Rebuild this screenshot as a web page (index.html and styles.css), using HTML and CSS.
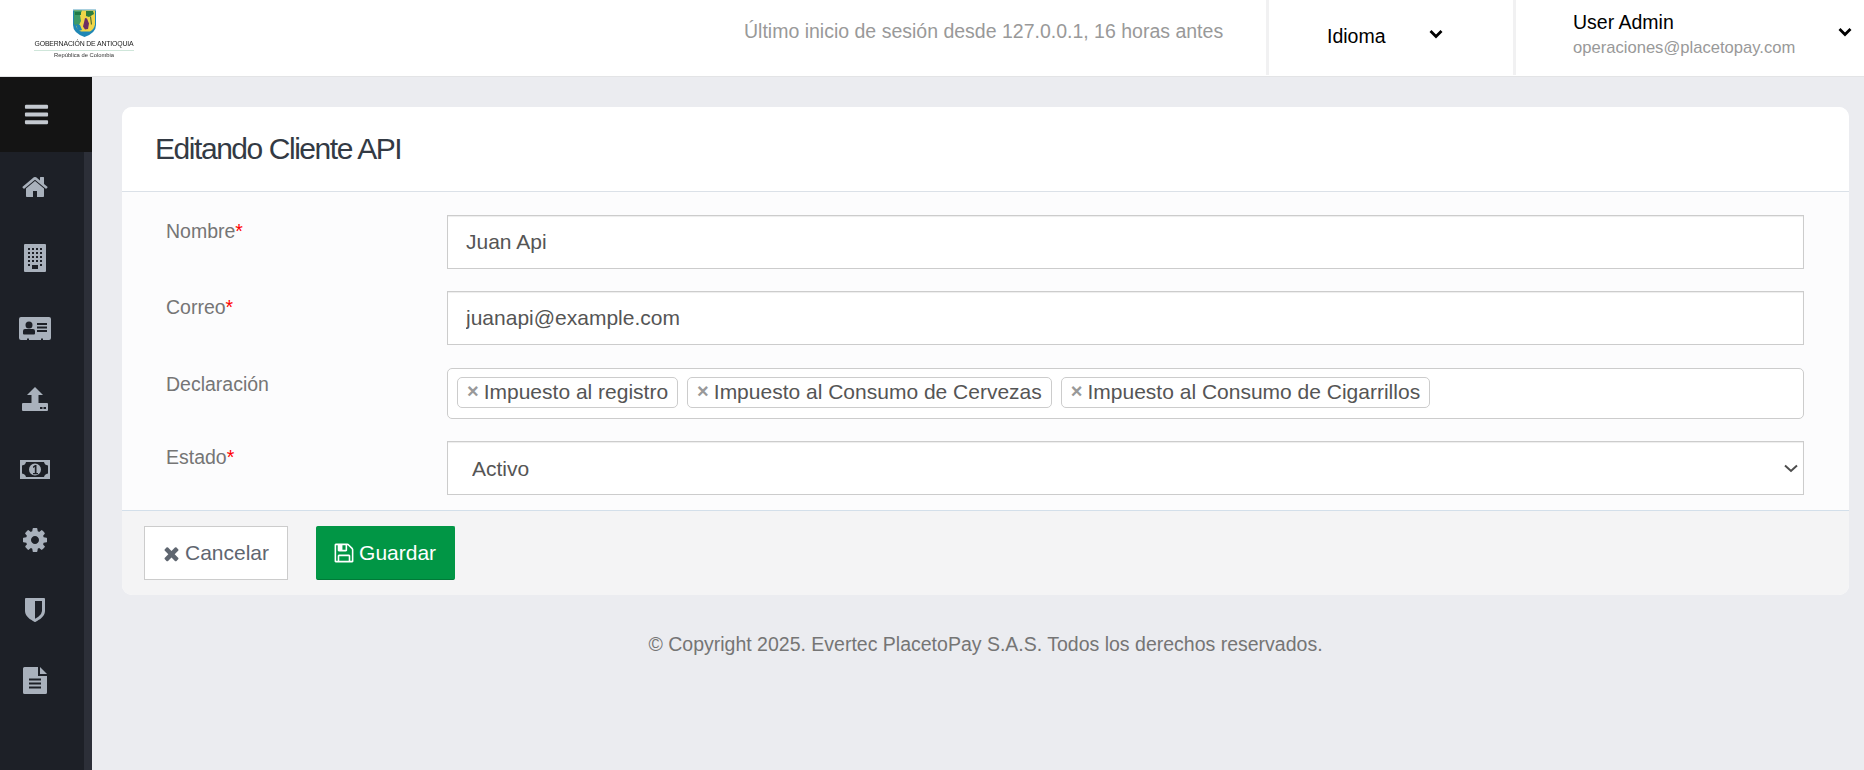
FILE: index.html
```html
<!DOCTYPE html>
<html lang="es">
<head>
<meta charset="utf-8">
<title>Editando Cliente API</title>
<link rel="stylesheet" href="styles.css">
</head>
<body>
<header class="topbar">
  <div class="logo">
    <svg class="logo-shield" viewBox="0 0 23 28" width="23" height="28">
      <path d="M0 0h23v16q0 8-11.500 12Q0 24 0 16z" fill="#1f87b5"/>
      <path d="M0 0h23v1.500H0z" fill="#a9d0df"/>
      <path d="M1 1.500h21v14q-1 5-5 7H8q-4-2-5-6z" fill="#f0d548"/>
      <path d="M1 1.500h8L7 6l1 6-3 6-4-3z" fill="#3d9a68"/>
      <path d="M2 3h6v3H2z" fill="#1f7a45"/>
      <path d="M3 15l4 1 2 5-4 1z" fill="#1f87b5"/>
      <path d="M12 9l2 .5 2 5-1 5.500-3 .5-2-3 1-4z" fill="#6d2f63"/>
      <path d="M13 2h7l1 3-5 3-3-1z" fill="#2c7d3f"/>
      <path d="M18 7l1 8-1 1-1-8z" fill="#4c6b2f"/>
    </svg>
    <span class="logo-name">GOBERNACIÓN DE ANTIOQUIA</span>
    <span class="logo-sub">República de Colombia</span>
  </div>
  <div class="last-login">Último inicio de sesión desde 127.0.0.1, 16 horas antes</div>
  <div class="menu menu-lang">
    <span>Idioma</span>
    <svg class="chev" viewBox="0 0 14 10" width="14" height="10"><path d="M1.500 2 7 7.500 12.500 2" fill="none" stroke="#000" stroke-width="2.800"/></svg>
  </div>
  <div class="menu menu-user">
    <div class="user-text">
      <span class="user-name">User Admin</span>
      <span class="user-mail">operaciones@placetopay.com</span>
    </div>
    <svg class="chev" viewBox="0 0 14 10" width="14" height="10"><path d="M1.500 2 7 7.500 12.500 2" fill="none" stroke="#000" stroke-width="2.800"/></svg>
  </div>
</header>
<div class="shell">
  <nav class="sidebar">
    <div class="toggle">
      <svg viewBox="0 0 1792 1792" width="27" height="27"><path fill="#c4c9d0" d="M1664 1344v128q0 26-19 45t-45 19h-1408q-26 0-45-19t-19-45v-128q0-26 19-45t45-19h1408q26 0 45 19t19 45zm0-512v128q0 26-19 45t-45 19h-1408q-26 0-45-19t-19-45v-128q0-26 19-45t45-19h1408q26 0 45 19t19 45zm0-512v128q0 26-19 45t-45 19h-1408q-26 0-45-19t-19-45v-128q0-26 19-45t45-19h1408q26 0 45 19t19 45z"/></svg>
    </div>
    <div class="nav-item">
      <svg viewBox="0 0 1792 1792" width="28" height="28"><path d="M1472 992v480q0 26-19 45t-45 19h-384v-384h-256v384h-384q-26 0-45-19t-19-45v-480q0-1 .5-3t.5-3l575-474 575 474q1 2 1 6zm223-69l-62 74q-8 9-21 11h-3q-13 0-21-7l-692-577-692 577q-12 8-24 7-13-2-21-11l-62-74q-8-10-7-23.500t11-21.500l719-599q32-26 76-26t76 26l244 204v-195q0-14 9-23t23-9h192q14 0 23 9t9 23v408l219 182q10 8 11 21.500t-7 23.500z"/></svg>
    </div>
    <div class="nav-item">
      <svg viewBox="0 0 22 28" width="22" height="28"><path fill-rule="evenodd" d="M1 0h20a1 1 0 0 1 1 1v26a1 1 0 0 1-1 1H1a1 1 0 0 1-1-1V1a1 1 0 0 1 1-1zM4 4v2h2V4zm4 0v2h2V4zm4 0v2h2V4zm4 0v2h2V4zM4 8v2h2V8zm4 0v2h2V8zm4 0v2h2V8zm4 0v2h2V8zM4 12v2h2v-2zm4 0v2h2v-2zm4 0v2h2v-2zm4 0v2h2v-2zM4 16v2h2v-2zm4 0v2h2v-2zm4 0v2h2v-2zm4 0v2h2v-2zM4 20v2h2v-2zm12 0v2h2v-2zM8 21v4h6v-4z"/></svg>
    </div>
    <div class="nav-item">
      <svg viewBox="0 0 32 23" width="32" height="23"><path fill-rule="evenodd" d="M2 0h28a2 2 0 0 1 2 2v19a2 2 0 0 1-2 2h-6v-1.500h-2V23H10v-1.500H8V23H2a2 2 0 0 1-2-2V2a2 2 0 0 1 2-2zM10 4.500a3.500 3.500 0 1 0 0 7 3.500 3.500 0 0 0 0-7zM6 12a2 2 0 0 0-2 2v2.500a1 1 0 0 0 1 1h10a1 1 0 0 0 1-1V14a2 2 0 0 0-2-2zM18 6v2h10V6zm0 3.500v2h10v-2zm0 3.500v2h10v-2z"/></svg>
    </div>
    <div class="nav-item">
      <svg viewBox="0 0 26 24" width="26" height="24"><path fill-rule="evenodd" d="M13 0l8 8h-4.500v8H25a1 1 0 0 1 1 1v6a1 1 0 0 1-1 1H1a1 1 0 0 1-1-1v-6a1 1 0 0 1 1-1h8.500V8H5zM18 20v2h2.500v-2zm3.500 0v2H24v-2z"/></svg>
    </div>
    <div class="nav-item">
      <svg viewBox="0 0 30 19" width="30" height="19"><path fill-rule="evenodd" d="M0 0h30v19H0zM6 2Q5.500 5 2 5.500v8Q5.500 14 6 17h18q.5-3 4-3.500v-8Q24.500 5 24 2zm9 1.500a6 6 0 1 1 0 12 6 6 0 0 1 0-12z"/><path fill="#1d2027" d="M13 6.500l2-1.500h1.500v8H18v1.300h-5V13h1.800V7l-1.800 1z"/></svg>
    </div>
    <div class="nav-item">
      <svg viewBox="0 0 1792 1792" width="28" height="28"><path d="M1152 896q0-106-75-181t-181-75-181 75-75 181 75 181 181 75 181-75 75-181zm512-109v222q0 12-8 23t-20 13l-185 28q-19 54-39 91 35 50 107 138 10 12 10 25t-9 23q-27 37-99 108t-94 71q-12 0-26-9l-138-108q-44 23-91 38-16 136-29 186-7 28-36 28h-222q-14 0-24.500-8.500t-11.500-21.500l-28-184q-49-16-90-37l-141 107q-10 9-25 9-14 0-25-11-126-114-165-168-7-10-7-23 0-12 8-23 15-21 51-66.500t54-70.500q-27-50-41-99l-183-27q-13-2-21-12.500t-8-23.500v-222q0-12 8-23t19-13l186-28q14-46 39-92-40-57-107-138-10-12-10-24 0-10 9-23 26-36 98.500-107.500t94.500-71.500q13 0 26 10l138 107q44-23 91-38 16-136 29-186 7-28 36-28h222q14 0 24.500 8.500t11.500 21.500l28 184q49 16 90 37l142-107q9-9 24-9 13 0 25 10 129 119 165 170 7 8 7 22 0 12-8 23-15 21-51 66.500t-54 70.500q26 50 41 98l183 28q13 2 21 12.500t8 23.500z"/></svg>
    </div>
    <div class="nav-item">
      <svg viewBox="0 0 1792 1792" width="28" height="28"><path d="M1344 960v-640h-448v1137q119-63 213-137 235-184 235-360zm192-768v768q0 86-33.500 170.500t-83 150-118 127.500-126.500 103-121 77.500-89.500 49.500-42.500 20q-12 6-26 6t-26-6q-16-7-42.500-20t-89.500-49.500-121-77.500-126.500-103-118-127.500-83-150-33.500-170.500v-768q0-26 19-45t45-19h1152q26 0 45 19t19 45z"/></svg>
    </div>
    <div class="nav-item">
      <svg viewBox="0 0 24 27" width="24" height="27"><path fill-rule="evenodd" d="M1.500 0H15v9h9v16.500a1.500 1.500 0 0 1-1.500 1.500h-21A1.500 1.500 0 0 1 0 25.500v-24A1.500 1.500 0 0 1 1.500 0zM6 11.500v2h12v-2zm0 4v2h12v-2zm0 4v2h12v-2z"/><path d="M17 0l7 7h-7z"/></svg>
    </div>
  </nav>
  <main class="content">
    <section class="card">
      <div class="card-head"><h1>Editando Cliente API</h1></div>
      <form class="card-body">
        <div class="row">
          <label class="lbl">Nombre<span class="req">*</span></label>
          <input class="ctl" type="text" value="Juan Api">
        </div>
        <div class="row">
          <label class="lbl">Correo<span class="req">*</span></label>
          <input class="ctl" type="text" value="juanapi@example.com">
        </div>
        <div class="row">
          <label class="lbl lbl-decl">Declaración</label>
          <div class="tags">
            <span class="tag"><span class="tag-x">×</span>Impuesto al registro</span>
            <span class="tag"><span class="tag-x">×</span>Impuesto al Consumo de Cervezas</span>
            <span class="tag"><span class="tag-x">×</span>Impuesto al Consumo de Cigarrillos</span>
          </div>
        </div>
        <div class="row">
          <label class="lbl lbl-state">Estado<span class="req">*</span></label>
          <div class="sel-wrap">
            <select class="ctl sel"><option>Activo</option></select>
            <svg class="sel-arrow" viewBox="0 0 14 9" width="14" height="9"><path d="M1 1.500 7 7l6-5.500" fill="none" stroke="#4d4d4d" stroke-width="2"/></svg>
          </div>
        </div>
      </form>
      <div class="card-foot">
        <button class="btn btn-cancel" type="button">
          <svg viewBox="0 0 1792 1792" width="21" height="21"><path fill="#5f6670" d="M1490 1322q0 40-28 68l-136 136q-28 28-68 28t-68-28l-294-294-294 294q-28 28-68 28t-68-28l-136-136q-28-28-28-68t28-68l294-294-294-294q-28-28-28-68t28-68l136-136q28-28 68-28t68 28l294 294 294-294q28-28 68-28t68 28l136 136q28 28 28 68t-28 68l-294 294 294 294q28 28 28 68z"/></svg>
          Cancelar
        </button>
        <button class="btn btn-save" type="button">
          <svg viewBox="0 0 1792 1792" width="22" height="22"><path fill="#fff" d="M512 1536h768v-384h-768v384zm896 0h128v-896q0-14-10-38.500t-20-34.500l-281-281q-10-10-34-20t-39-10v416q0 40-28 68t-68 28h-576q-40 0-68-28t-28-68v-416h-128v1280h128v-416q0-40 28-68t68-28h832q40 0 68 28t28 68v416zm-384-928v-320q0-13-9.500-22.500t-22.500-9.500h-192q-13 0-22.500 9.500t-9.500 22.500v320q0 13 9.500 22.500t22.500 9.500h192q13 0 22.500-9.500t9.500-22.500zm640 32v928q0 40-28 68t-68 28h-1344q-40 0-68-28t-28-68v-1344q0-40 28-68t68-28h928q40 0 88 20t76 48l280 280q28 28 48 76t20 88z"/></svg>
          Guardar
        </button>
      </div>
    </section>
    <footer class="copy">© Copyright 2025. Evertec PlacetoPay S.A.S. Todos los derechos reservados.</footer>
  </main>
</div>
</body>
</html>
```
FILE: styles.css
```css
* { box-sizing: border-box; }
html, body { height: 100%; }
body {
  margin: 0;
  display: flex;
  flex-direction: column;
  overflow: hidden;
  font-family: "Liberation Sans", Arial, sans-serif;
  background: #ebecf0;
  color: #555;
}
.topbar {
  flex: 0 0 77px;
  display: flex;
  align-items: stretch;
  background: #fff;
  border-bottom: 1px solid #e3e4e6;
}
.logo {
  width: 168px;
  padding: 9px 0 0 0;
  display: flex;
  flex-direction: column;
  align-items: center;
  filter: blur(.35px);
}
.logo-shield { display: block; }
.logo-name {
  margin-top: 2px;
  padding-bottom: 1px;
  font-size: 6.900px;
  line-height: 10px;
  color: #222;
  white-space: nowrap;
  border-bottom: 1px solid #cfe6da;
  letter-spacing: -.15px;
}
.logo-sub { font-size: 5.800px; line-height: 8px; color: #333; }
.last-login {
  flex: 1;
  padding: 21px 0 0 576px;
  font-size: 19.500px;
  line-height: 21px;
  color: #999;
  white-space: nowrap;
}
.menu {
  height: 75px;
  border-left: 3px solid #f1f1f2;
  color: #000;
  font-size: 19.500px;
  position: relative;
}
.menu-lang {
  flex: 0 0 247px;
  padding: 26px 0 0 58px;
  line-height: 21px;
}
.menu-user {
  flex: 0 0 351px;
  padding: 12px 0 0 57px;
}
.chev { position: absolute; }
.menu-lang .chev { left: 160px; top: 29px; }
.menu-user .chev { left: 322px; top: 27px; }
.user-text { display: flex; flex-direction: column; }
.user-name { line-height: 21px; }
.user-mail { margin-top: 6px; font-size: 16.600px; line-height: 18px; color: #999; }
.shell { flex: 1; display: flex; min-height: 0; }
.sidebar {
  flex: 0 0 92px;
  min-width: 0;
  background: #1d2027;
  border-right: 8px solid #2c2f38;
  position: relative;
}
.toggle {
  height: 75px;
  width: 92px;
  background: #141414;
  display: flex;
  align-items: center;
  justify-content: center;
  padding-right: 20px;
}
.nav-item {
  height: 70.500px;
  display: flex;
  align-items: center;
  justify-content: center;
  padding-right: 15px;
}
.nav-item svg { fill: #a9b1bc; display: block; }
.content { flex: 1; padding: 30px 15px 0 30px; min-width: 0; }
.card { border-radius: 10px; background: #fcfcfd; }
.card-head {
  height: 85px;
  background: #fff;
  border-radius: 10px 10px 0 0;
  border-bottom: 1px solid #dbe1e8;
  padding: 24px 0 0 33px;
}
h1 {
  margin: 0;
  font-size: 30px;
  line-height: 36px;
  font-weight: 400;
  letter-spacing: -1.450px;
  color: #333a44;
}
.card-body {
  display: flex;
  flex-direction: column;
  gap: 22px;
  padding: 23px 45px 15px 44px;
  border-radius: 8px 8px 0 0;
}
.row { display: flex; align-items: flex-start; }
.lbl {
  flex: 0 0 281px;
  font-size: 19.500px;
  line-height: 21px;
  padding-top: 6px;
  color: #757575;
}
.lbl-decl { padding-top: 7px; }
.lbl-state { padding-top: 6px; }
.req { color: #f00; }
.ctl {
  flex: 1;
  height: 54px;
  min-width: 0;
  border: 1px solid #ccc;
  border-radius: 0;
  background: #fff;
  box-shadow: inset 0 1px 1px rgba(0,0,0,.075);
  padding: 0 18px;
  font-family: inherit;
  font-size: 21px;
  color: #555;
}
.sel-wrap { flex: 1; display: flex; position: relative; }
.sel { padding: 0 24px; outline: none; appearance: none; }
.sel-arrow { position: absolute; right: 6px; top: 23px; }
.tags {
  flex: 1;
  height: 51px;
  margin-top: 1px;
  display: flex;
  align-items: flex-start;
  gap: 9px;
  padding: 8px 9px;
  border: 1px solid #ccc;
  border-radius: 5px;
  background: #fff;
}
.tag {
  height: 31px;
  display: flex;
  align-items: center;
  padding: 0 9px 2px;
  border: 1px solid #ccc;
  border-radius: 5px;
  font-size: 21px;
  color: #555;
  white-space: nowrap;
}
.tag-x { color: #999; font-weight: 700; margin-right: 5px; font-size: 20px; }
.card-foot {
  height: 85px;
  display: flex;
  gap: 28px;
  padding: 15px 22px;
  background: #f4f4f5;
  border-top: 1px solid #d3dfea;
  border-radius: 0 0 10px 10px;
}
.btn {
  height: 54px;
  display: flex;
  align-items: center;
  gap: 4px;
  padding: 0 18px 0 16px;
  font-family: inherit;
  font-size: 21px;
  border-radius: 0;
}
.btn-cancel { background: #fff; border: 1px solid #ccc; color: #5f6670; gap: 3px; }
.btn-save {
  background: #019645;
  border: 1px solid #019645;
  border-bottom-color: #017a38;
  border-radius: 2px;
  color: #fff;
}
.copy {
  margin-top: 39px;
  text-align: center;
  font-size: 19.500px;
  line-height: 21px;
  color: #757575;
}
```
